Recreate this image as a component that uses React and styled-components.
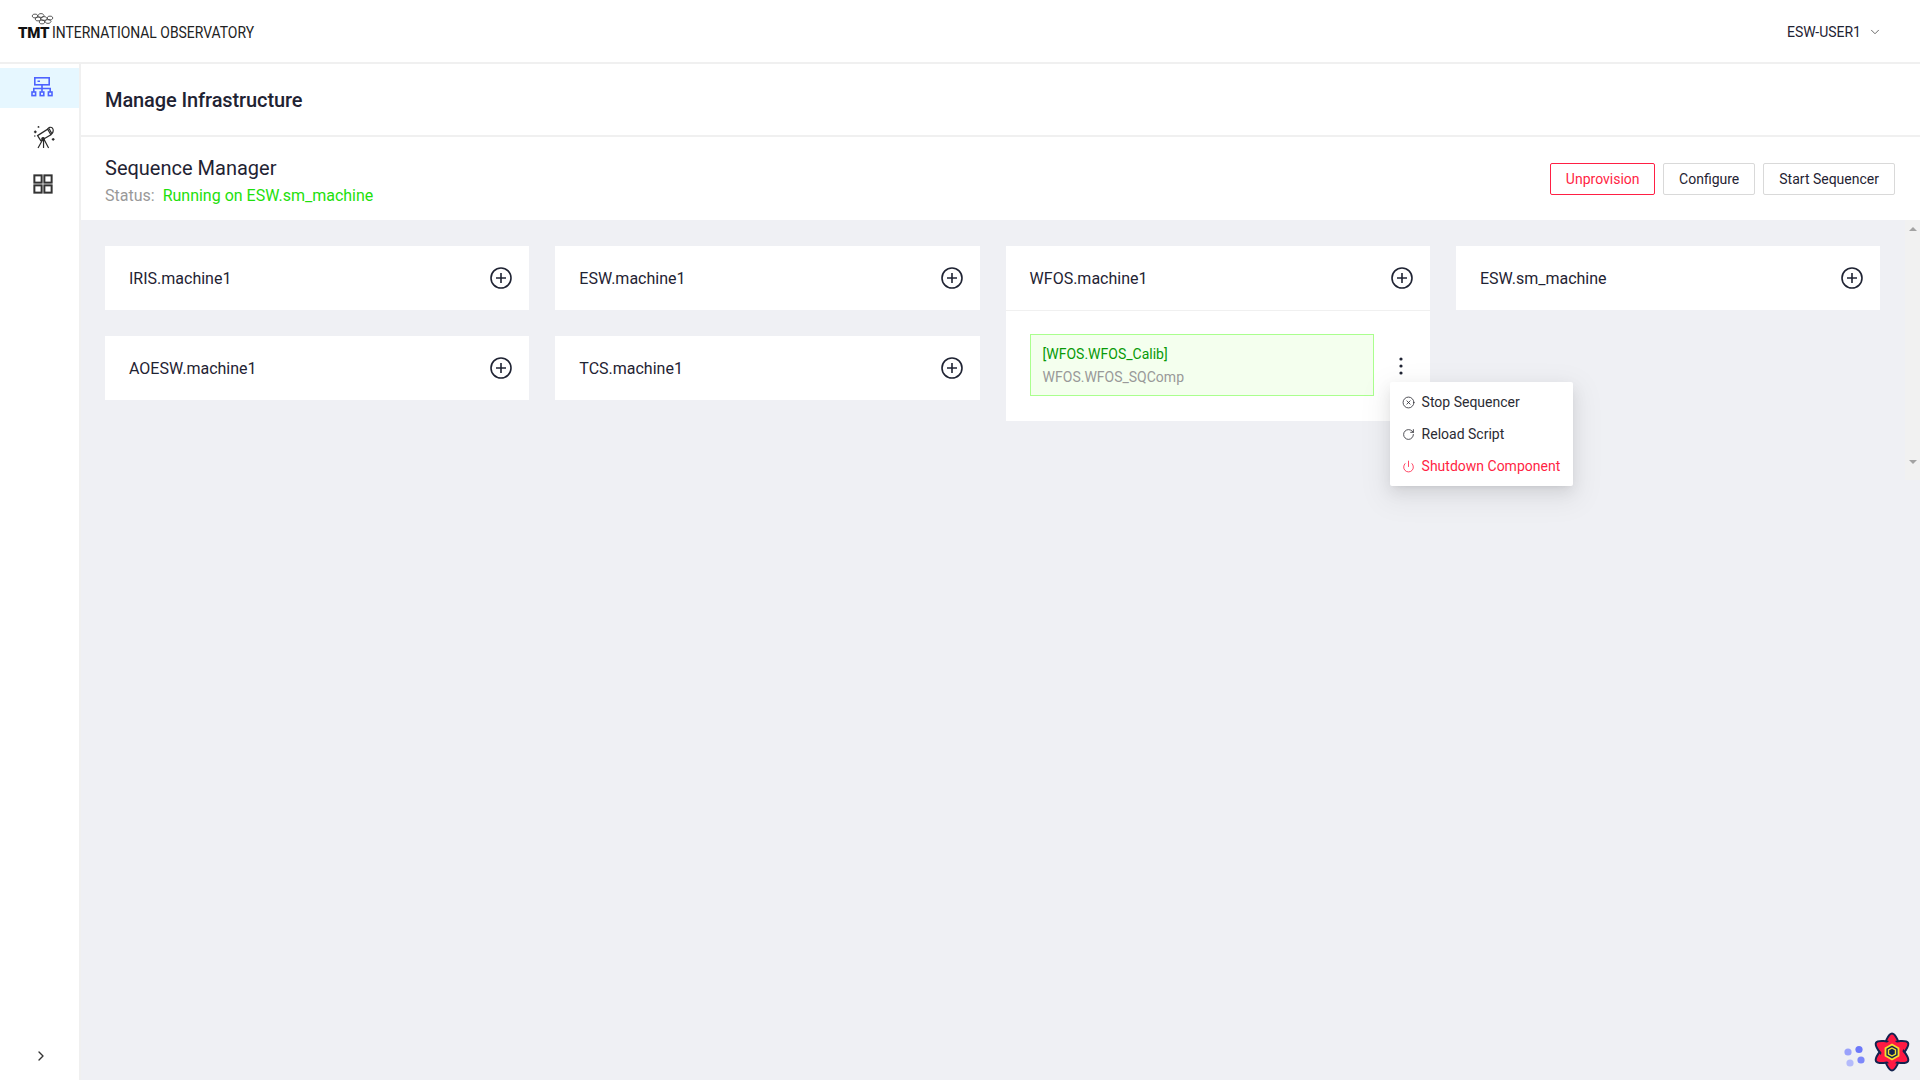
import React from "react";
import styled, { createGlobalStyle } from "styled-components";
import { ChevronDown, ChevronRight, RotateCw, Power, CircleX } from "lucide-react";

const GlobalStyle = createGlobalStyle`
  * { box-sizing: border-box; }
  html, body { margin: 0; height: 100%; }
  body {
    font-family: Roboto, "Liberation Sans", sans-serif;
    color: #1f2333;
    background: #f0f1f5;
  }
`;

const Page = styled.div`
  position: relative;
  display: flex;
  flex-direction: column;
  width: 1920px;
  height: 1080px;
  overflow: hidden;
`;

// top bar
const Header = styled.header`
  display: flex;
  align-items: center;
  justify-content: space-between;
  height: 64px;
  padding: 0 38px 0 18px;
  background: #fff;
  border-bottom: 2px solid #f0f0f0;
`;
const Brand = styled.div`
  position: relative;
  display: flex;
  align-items: baseline;
  gap: 3px;
  padding-top: 2px;
`;
const BrandMark = styled.span`
  font-size: 15px;
  font-weight: 900;
  letter-spacing: -0.2px;
  color: #111;
`;
const BrandName = styled.span`
  font-size: 16px;
  color: #222;
  transform: scaleX(0.87);
  transform-origin: left center;
`;
const Mirror = styled.svg`
  position: absolute;
  left: 13px;
  top: -8px;
`;
const UserMenu = styled.div`
  display: flex;
  align-items: center;
  gap: 7px;
  font-size: 14px;
  padding-top: 2px;
`;

const Body = styled.div`
  flex: 1;
  display: flex;
  min-height: 0;
`;

// left nav
const Sidebar = styled.nav`
  display: flex;
  flex-direction: column;
  width: 81px;
  padding-top: 4px;
  background: #fff;
  border-right: 2px solid #f0f0f0;
`;
const NavItem = styled.div`
  display: flex;
  align-items: center;
  justify-content: center;
  height: 40px;
  margin-bottom: 8px;
  padding-left: ${(p) => p.$shift || 5}px;
  padding-top: ${(p) => p.$drop || 0}px;
  background: ${(p) => (p.$active ? "#e6f7ff" : "transparent")};
`;
const Collapse = styled.div`
  display: flex;
  justify-content: center;
  margin-top: auto;
  padding: 0 0 16px 2px;
  color: #333;
`;

const Main = styled.main`
  flex: 1;
  display: flex;
  flex-direction: column;
  min-width: 0;
`;
const TitleBar = styled.div`
  display: flex;
  align-items: center;
  height: 73px;
  padding: 0 24px;
  background: #fff;
  border-bottom: 2px solid #f0f0f0;
`;
const Title = styled.h1`
  margin: 0;
  font-size: 20px;
  font-weight: 500;
  letter-spacing: -0.1px;
  color: #1f2333;
`;
const SectionBar = styled.div`
  display: flex;
  align-items: center;
  justify-content: space-between;
  height: 83px;
  padding: 0 25px 0 24px;
  background: #fff;
`;
const SectionInfo = styled.div`
  padding-top: 4px;
`;
const SectionName = styled.div`
  font-size: 20px;
  line-height: 28px;
`;
const Status = styled.div`
  margin-top: 2px;
  font-size: 16px;
  line-height: 24px;
  color: #999;
`;
const StatusValue = styled.span`
  margin-left: 8px;
  color: #1ee00c;
`;
const Actions = styled.div`
  display: flex;
  gap: 8px;
`;
const Button = styled.button`
  height: 32px;
  padding: 0 ${(p) => (p.$danger ? "14.5px" : "15px")};
  font: 14px Roboto, sans-serif;
  color: ${(p) => (p.$danger ? "#ff1f44" : "#1f2333")};
  background: #fff;
  border: 1px solid ${(p) => (p.$danger ? "#ff1f44" : "#d9d9d9")};
  border-radius: 2px;
`;

const Content = styled.div`
  flex: 1;
  display: flex;
  align-items: flex-start;
  min-height: 0;
  background: #eff0f4;
`;
const Board = styled.div`
  flex: 1;
  min-width: 0;
  display: grid;
  grid-template-columns: repeat(4, 424.3px);
  column-gap: 26px;
  align-items: start;
  padding: 26px 0 26px 24px;
`;
const Column = styled.div`
  display: flex;
  flex-direction: column;
  gap: 26px;
`;
const Card = styled.section`
  background: #fff;
`;
const CardHead = styled.div`
  display: flex;
  align-items: center;
  justify-content: space-between;
  height: ${(p) => (p.$open ? "65px" : "64px")};
  padding: 0 17px 0 24px;
  font-size: 16px;
  color: #1f2333;
  border-bottom: ${(p) => (p.$open ? "1px solid #f0f0f0" : "none")};
`;
const CardBody = styled.div`
  display: flex;
  align-items: center;
  padding: 23px 24px 25px 24px;
`;
const Sequencer = styled.div`
  flex: none;
  width: 344px;
  height: 62px;
  padding: 8px 12px;
  font-size: 14px;
  line-height: 23px;
  background: #f4ffee;
  border: 1px solid #aaff8e;
`;
const SeqName = styled.div`
  color: #079a07;
`;
const SeqComp = styled.div`
  color: #999;
`;
const MenuAnchor = styled.div`
  position: relative;
  display: flex;
  justify-content: center;
  width: 28px;
  margin: 2px 0 0 23px;
  color: #1f2333;
`;
const Dropdown = styled.ul`
  position: absolute;
  top: 25px;
  left: -7px;
  z-index: 5;
  width: 183px;
  margin: 0;
  padding: 4px 0;
  list-style: none;
  background: #fff;
  border-radius: 2px;
  box-shadow: 0 3px 6px -4px rgba(0, 0, 0, 0.12), 0 6px 16px rgba(0, 0, 0, 0.08),
    0 9px 28px 8px rgba(0, 0, 0, 0.05);
`;
const DropdownItem = styled.li`
  display: flex;
  align-items: center;
  gap: 7px;
  height: 32px;
  padding: 0 12px;
  font-size: 14px;
  white-space: nowrap;
  color: ${(p) => (p.$danger ? "#ff1f44" : "#2b2b33")};
`;

// fake scrollbar
const ScrollTrack = styled.div`
  flex: none;
  display: flex;
  flex-direction: column;
  justify-content: space-between;
  align-items: center;
  width: 15px;
  height: 260px;
  padding: 7px 0 2px;
  background: #f1f1f1;
`;
const Arrow = styled.span`
  width: 0;
  height: 0;
  border-left: 4px solid transparent;
  border-right: 4px solid transparent;
  border-${(p) => (p.$down ? "top" : "bottom")}: 4px solid #a3a3a3;
  margin-bottom: ${(p) => (p.$down ? "14px" : "0")};
`;

// dev widgets in the corner
const Corner = styled.div`
  position: absolute;
  right: 8px;
  bottom: 8px;
  display: flex;
  align-items: center;
  gap: 7px;
`;
const DotsWrap = styled.div`
  display: flex;
  margin-top: 7px;
`;

const HierarchyIcon = () => (
  <svg width="24" height="24" viewBox="0 0 24 24" fill="none" stroke="#4d63ff" strokeWidth="1.6">
    <rect x="4.800" y="1.800" width="14.400" height="7" />
    <path d="M7.500 5.300h2.500M12 8.800v7M3.800 16v-3.500h16.400V16" />
    <rect x="2" y="16" width="3.600" height="3.600" />
    <rect x="10.200" y="16" width="3.600" height="3.600" />
    <rect x="18.400" y="16" width="3.600" height="3.600" />
  </svg>
);

const TelescopeIcon = () => (
  <svg width="22" height="26" viewBox="0 0 24 26" fill="none" stroke="#2a2a2a" strokeWidth="1.3">
    <path d="M5 11.500l11-7 3.500 6-11 6.500z" />
    <path d="M16 4.500c1-2 3.500-2.800 5-1.500 1.500 1.500 1.500 4.500-.5 6.500-.5.500-1 .8-1.500 1" />
    <path d="M17.500 3.800l3 5.500" />
    <path d="M10.500 16l-5 9M11.500 16v9M12 15.500l5 9.500" />
    <circle cx="11" cy="15" r="1.400" fill="#2a2a2a" />
    <path d="M1 7.500h3M2.500 6v3M20.500 15.500h3M22 14v3" />
    <circle cx="6" cy="2" r="1" fill="#2a2a2a" stroke="none" />
    <circle cx="2" cy="12" r=".8" fill="#2a2a2a" stroke="none" />
  </svg>
);

const AppsIcon = () => (
  <svg width="20" height="20" viewBox="0 0 22 22" fill="none" stroke="#333" strokeWidth="2.200">
    <rect x="1.500" y="1.500" width="8" height="8" />
    <rect x="12.500" y="1.500" width="8" height="8" />
    <rect x="1.500" y="12.500" width="8" height="8" />
    <rect x="12.500" y="12.500" width="8" height="8" />
  </svg>
);

const AddIcon = () => (
  <svg width="22" height="22" viewBox="0 0 22 22" fill="none" stroke="#1f2333" strokeWidth="1.600">
    <circle cx="11" cy="11" r="10" />
    <path d="M11 6v10M6 11h10" />
  </svg>
);

const KebabIcon = () => (
  <svg width="4" height="18" viewBox="0 0 4 18" fill="#1f2333">
    <circle cx="2" cy="2" r="1.600" />
    <circle cx="2" cy="9" r="1.600" />
    <circle cx="2" cy="16" r="1.600" />
  </svg>
);

const mirrorCells = [
  [4, 3], [10, 2.500], [7, 6], [13, 5.500], [19, 5], [11, 9], [17, 8.500],
];

const MirrorMark = () => (
  <Mirror width="24" height="13" viewBox="0 0 24 13" fill="none" stroke="#333" strokeWidth="0.800">
    {mirrorCells.map(([x, y]) => (
      <path key={`${x}-${y}`} d={`M${x - 3} ${y}l1.500-1.800h3l1.500 1.800-1.500 1.800h-3z`} />
    ))}
  </Mirror>
);

const DevDots = () => (
  <svg width="22" height="22" viewBox="0 0 22 22">
    <circle cx="5" cy="7" r="3.600" fill="#9aa2fb" />
    <circle cx="16" cy="4.500" r="3.600" fill="#6c78fa" />
    <circle cx="7" cy="18" r="3.600" fill="#b4bbfb" />
    <circle cx="18" cy="15" r="3.600" fill="#7d88fa" />
  </svg>
);

const petalPath = "M20 1.500C23 1.500 28.500 11 28.500 20S23 38.500 20 38.500S11.500 29 11.500 20S17 1.500 20 1.500z";

const DevFlower = () => (
  <svg width="40" height="40" viewBox="0 0 40 40">
    <g fill="#ff1a44" stroke="#14234f" strokeWidth="2">
      {[0, 60, 120].map((r) => (
        <path key={r} d={petalPath} transform={`rotate(${r} 20 20)`} />
      ))}
    </g>
    <g fill="#ff1a44">
      {[0, 60, 120].map((r) => (
        <ellipse key={r} cx="20" cy="20" rx="7.500" ry="12" transform={`rotate(${r} 20 20)`} />
      ))}
    </g>
    <path d="M20 12.500l6.500 3.750v7.500L20 27.500l-6.500-3.750v-7.500z" fill="#14234f" stroke="#f2e22e" strokeWidth="1.800" />
    <path d="M20 16l3.500 2v4L20 24l-3.500-2v-4z" fill="none" stroke="#f2e22e" strokeWidth="1.400" />
  </svg>
);

const columns = [
  ["IRIS.machine1", "AOESW.machine1"],
  ["ESW.machine1", "TCS.machine1"],
  ["WFOS.machine1"],
  ["ESW.sm_machine"],
];

const App = () => {
  return (
    <Page>
      <GlobalStyle />
      <Header>
        <Brand>
          <MirrorMark />
          <BrandMark>TMT</BrandMark>
          <BrandName>INTERNATIONAL OBSERVATORY</BrandName>
        </Brand>
        <UserMenu>
          ESW-USER1
          <ChevronDown size={14} strokeWidth={1.5} color="#555" />
        </UserMenu>
      </Header>
      <Body>
        <Sidebar>
          <NavItem $active>
            <HierarchyIcon />
          </NavItem>
          <NavItem $shift={8} $drop={2}>
            <TelescopeIcon />
          </NavItem>
          <NavItem $shift={6}>
            <AppsIcon />
          </NavItem>
          <Collapse>
            <ChevronRight size={16} />
          </Collapse>
        </Sidebar>
        <Main>
          <TitleBar>
            <Title>Manage Infrastructure</Title>
          </TitleBar>
          <SectionBar>
            <SectionInfo>
              <SectionName>Sequence Manager</SectionName>
              <Status>
                Status:
                <StatusValue>Running on ESW.sm_machine</StatusValue>
              </Status>
            </SectionInfo>
            <Actions>
              <Button $danger>Unprovision</Button>
              <Button>Configure</Button>
              <Button>Start Sequencer</Button>
            </Actions>
          </SectionBar>
          <Content>
            <Board>
              {columns.map((names) => (
                <Column key={names[0]}>
                  {names.map((name) => (
                    <Card key={name}>
                      <CardHead $open={name === "WFOS.machine1"}>
                        {name}
                        <AddIcon />
                      </CardHead>
                      {name === "WFOS.machine1" && (
                        <CardBody>
                          <Sequencer>
                            <SeqName>[WFOS.WFOS_Calib]</SeqName>
                            <SeqComp>WFOS.WFOS_SQComp</SeqComp>
                          </Sequencer>
                          <MenuAnchor>
                            <KebabIcon />
                            <Dropdown>
                              <DropdownItem>
                                <CircleX size={13} strokeWidth={1.5} />
                                Stop Sequencer
                              </DropdownItem>
                              <DropdownItem>
                                <RotateCw size={13} strokeWidth={1.5} />
                                Reload Script
                              </DropdownItem>
                              <DropdownItem $danger>
                                <Power size={13} strokeWidth={1.5} />
                                Shutdown Component
                              </DropdownItem>
                            </Dropdown>
                          </MenuAnchor>
                        </CardBody>
                      )}
                    </Card>
                  ))}
                </Column>
              ))}
            </Board>
            <ScrollTrack>
              <Arrow />
              <Arrow $down />
            </ScrollTrack>
          </Content>
        </Main>
      </Body>
      <Corner>
        <DotsWrap>
          <DevDots />
        </DotsWrap>
        <DevFlower />
      </Corner>
    </Page>
  );
};

export default App;
